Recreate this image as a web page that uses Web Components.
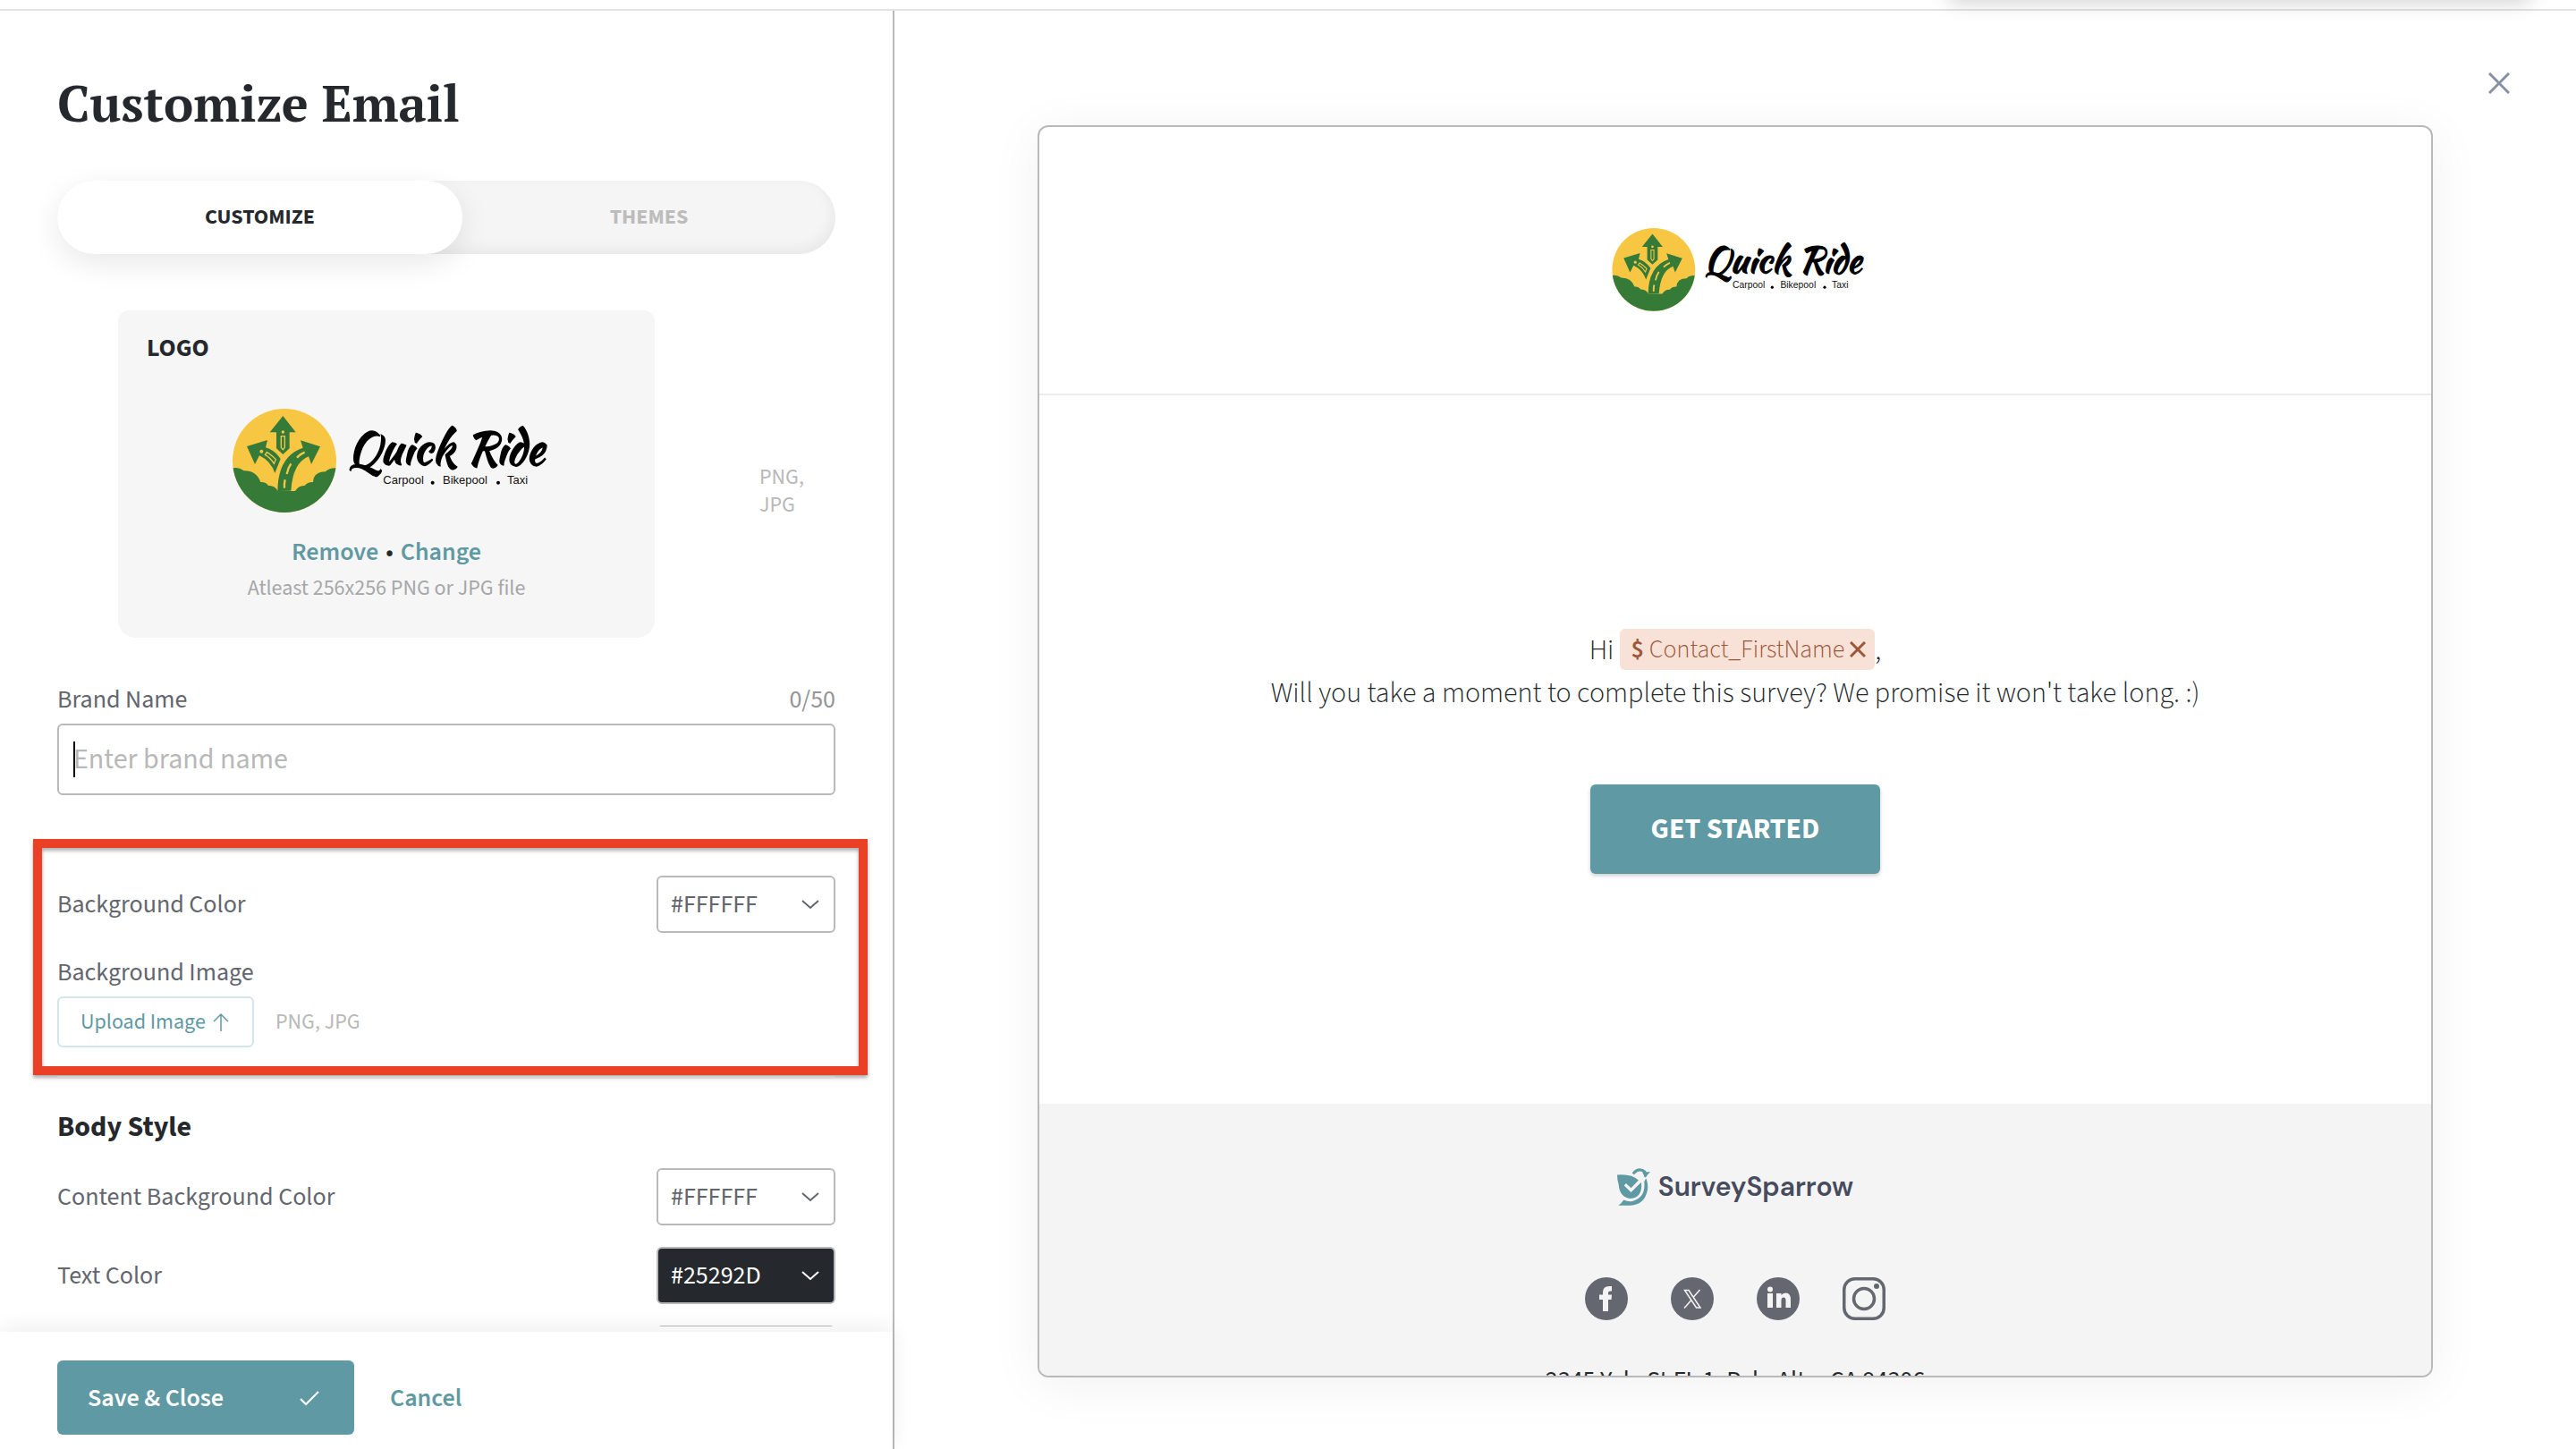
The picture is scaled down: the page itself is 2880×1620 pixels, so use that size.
<!DOCTYPE html>
<html lang="en">
<head>
<meta charset="utf-8">
<title>Customize Email</title>
<style>
  html, body { height: 100%; margin: 0; }
  body {
    --ink: #25292d;
    --label: #63666e;
    --muted: #b8b8b8;
    --line: #b9b9b9;
    --teal: #5f99a3;
    --sans: "Source Sans 3", "Noto Sans CJK JP", "Noto Sans", sans-serif;
    font-family: var(--sans);
    font-size: 28px;
    line-height: 36px;
    color: var(--ink);
    background: #fff;
    overflow: hidden;
  }
</style>
</head>
<body>
<email-customizer></email-customizer>

<script>
  function define(name, html, setup) {
    const template = document.createElement('template');
    template.innerHTML = html;
    customElements.define(name, class extends HTMLElement {
      constructor() {
        super();
        this.attachShadow({ mode: 'open' }).append(template.content.cloneNode(true));
      }
      connectedCallback() {
        if (setup) setup(this, this.shadowRoot);
      }
    });
  }

  define('quick-ride-logo', `
    <style>
      :host { display: block; width: 360px; }
      svg { display: block; width: 100%; height: auto; }
    </style>
    <svg viewBox="36 51 1080 348" role="img" aria-label="Quick Ride">
      <defs><clipPath id="disc"><circle cx="234" cy="225" r="174"/></clipPath></defs>
      <circle cx="234" cy="225" r="174" fill="#f7c744"/>
      <g clip-path="url(#disc)" fill="#367a38">
        <path d="M50 252 Q78 243 98 259 Q140 258 154 297 Q172 296 179 308 Q202 308 212 327 L270 327 Q282 307 302 309 Q312 296 330 297 Q332 262 372 262 Q386 246 420 251 V410 H50Z"/>
        <path d="M229 75 L272 130 H251 V184 L229 204 L207 184 V130 H185Z"/>
        <path d="M108 177 L177 156 L171 181 Q202 190 221 219 L202 267 Q188 226 150 208 L135 237Z"/>
        <path d="M288 157 L354 178 L324 237 L315 211 Q262 232 256 326 L211 327 Q212 210 296 182Z"/>
      </g>
      <g fill="none" stroke="#f7c744" stroke-width="4">
        <path d="M223 143 H235 V181 L229 188 L223 181Z"/>
        <path d="M169 205 L175 197 Q192 207 205 221 L199 235 Q187 215 169 205Z"/>
        <path d="M242 270 Q246 249 256 235 M234 317 Q233 302 236 289" stroke-width="7"/>
        <path d="M276 215 Q287 203 302 197" stroke-width="7"/>
      </g>
      <g fill="#f7c744"><circle cx="229" cy="129" r="5"/><circle cx="157" cy="194" r="6"/></g>
      <text x="446" y="237" font-family="Kaushan Script, cursive" font-size="152" fill="#000" stroke="#000" stroke-width="4">Quick Ride</text>
      <g font-family="Liberation Sans, Arial, sans-serif" font-size="39" fill="#111">
        <text x="565" y="303">Carpool</text>
        <text x="765" y="303">Bikepool</text>
        <text x="981" y="303">Taxi</text>
      </g>
      <circle cx="731" cy="299" r="6"/><circle cx="951" cy="299" r="6"/>
    </svg>`);

  define('sparrow-logo', `
    <style>
      :host { display: flex; align-items: center; gap: 9px; height: 42px;
        font: 600 30px/42px "DM Sans", sans-serif; color: #464b5e; }
      svg { flex: none; width: 37px; height: 42px; }
    </style>
    <svg viewBox="270 257 110 125" aria-hidden="true">
      <path fill="#5f99a3" d="M270 279 Q318 275 341 297 L316 323 L300 308 L293 315 L316 337 L350 304 Q356 355 314 358 Q278 354 275 312 Q270 297 270 279Z"/>
      <path fill="none" stroke="#5f99a3" stroke-width="9" d="M323 276 Q341 253 364 270"/>
      <path fill="#5f99a3" d="M353 262 L365 270 L380 270 Q370 279 366 287 L357 291 Q362 281 355 274Z"/>
      <path fill="#5f99a3" d="M366 291 Q374 307 371 330 Q361 379 314 381 Q294 381 274 381 Q284 375 292 363 Q306 369 320 367 Q366 356 360 302Z"/>
      <path fill="none" stroke="#f4f4f4" stroke-width="7" d="M297 311 L316 330 L362 287"/>
    </svg>
    <span>SurveySparrow</span>`);

  define('segment-tabs', `
    <style>
      :host { display: block; }
      div { display: flex; height: 82px; border-radius: 41px; background: #f5f5f5;
        box-shadow: inset -4px -6px 14px rgba(0,0,0,.05); }
      button { flex: 417 1 0; border: 0; padding: 0; border-radius: 41px; background: none;
        font: 700 24px/30px var(--sans); color: #bcbcbc; }
      button[aria-selected=true] { flex-grow: 453; background: #fff; color: var(--ink);
        box-shadow: 0 10px 34px rgba(0,0,0,.09); }
    </style>
    <div role="tablist">
      <button role="tab" aria-selected="true">CUSTOMIZE</button>
      <button role="tab" aria-selected="false">THEMES</button>
    </div>`);

  define('logo-uploader', `
    <style>
      :host { display: flex; align-items: center; gap: 117px; padding-left: 68px; }
      section { box-sizing: border-box; flex: 0 1 600px; height: 366px; padding: 24px 32px 0;
        border-radius: 12px 12px 20px 20px; background: #f6f6f6;
        display: flex; flex-direction: column; align-items: center; }
      h2 { align-self: flex-start; margin: 0 0 50px; font-size: 28px; line-height: 36px; font-weight: 700; }
      .actions { display: flex; gap: 8px; margin-top: 26px; }
      a { color: var(--teal); font-weight: 600; text-decoration: none; }
      small { font-size: 24px; line-height: 30px; color: #a6a7a9; margin-top: 8px; }
      p { width: 60px; margin: 0; padding-top: 38px; font-size: 24px; line-height: 31px; color: var(--muted); }
    </style>
    <section>
      <h2>LOGO</h2>
      <quick-ride-logo></quick-ride-logo>
      <div class="actions"><a href="#remove">Remove</a><span>•</span><a href="#change">Change</a></div>
      <small>Atleast 256x256 PNG or JPG file</small>
    </section>
    <p>PNG, JPG</p>`);

  define('brand-field', `
    <style>
      :host { display: block; }
      .top { display: flex; justify-content: space-between; margin-bottom: 9px; }
      label { color: var(--label); }
      output { color: #939598; }
      .box { position: relative; }
      .box::after { content: ""; position: absolute; left: 18px; top: 20px; width: 2px; height: 40px; background: #000; }
      input { display: block; box-sizing: border-box; width: 100%; height: 80px; padding: 0 16px;
        border: 2px solid var(--line); border-radius: 6px; background: #fff; outline: 0;
        font: 400 32px/40px var(--sans); color: var(--ink); }
      input::placeholder { color: var(--muted); opacity: 1; }
    </style>
    <div class="top"><label for="brand">Brand Name</label><output for="brand">0/50</output></div>
    <div class="box"><input id="brand" type="text" maxlength="50" placeholder="Enter brand name"></div>`);

  define('color-field', `
    <style>
      :host { display: flex; align-items: center; justify-content: space-between; height: 64px;
        --swatch: #fff; --on: var(--label); }
      :host([dark]) { --swatch: #25292d; --on: #fff; }
      label { color: var(--label); }
      .box { display: grid; align-items: center; width: 200px; }
      select, svg { grid-area: 1 / 1; }
      select { appearance: none; box-sizing: border-box; width: 100%; height: 64px; padding: 0 14px;
        border: 2px solid var(--line); border-radius: 6px; background: var(--swatch); color: var(--on);
        font: 400 28px/36px var(--sans); }
      svg { justify-self: end; width: 20px; height: 12px; margin-right: 18px; pointer-events: none;
        fill: none; stroke: var(--on); stroke-width: 2; }
    </style>
    <label for="color"></label>
    <div class="box">
      <select id="color"><option></option></select>
      <svg viewBox="0 0 20 12" aria-hidden="true"><path d="M1 2 L10 10 L19 2"/></svg>
    </div>`, (host, root) => {
      root.querySelector('label').textContent = host.getAttribute('label');
      root.querySelector('option').textContent = host.getAttribute('value');
    });

  define('image-upload', `
    <style>
      :host { display: block; }
      span { display: block; color: var(--label); margin-bottom: 9px; }
      div { display: flex; align-items: center; gap: 24px; }
      button { display: flex; align-items: center; gap: 8px; box-sizing: border-box; height: 57px; width: 220px;
        padding: 0 24px; border: 2px solid #d2e5e9; border-radius: 6px; background: #fff; white-space: nowrap;
        font: 400 24px/30px var(--sans); color: var(--teal); }
      svg { flex: none; width: 18px; height: 22px; fill: none; stroke: currentColor; stroke-width: 1.500; }
      small { font-size: 24px; line-height: 30px; color: var(--muted); }
    </style>
    <span id="title">Background Image</span>
    <div>
      <button aria-describedby="title">Upload Image
        <svg viewBox="0 0 18 22" aria-hidden="true"><path d="M9 21 V2 M1 10 L9 2 L17 10"/></svg>
      </button>
      <small>PNG, JPG</small>
    </div>`);

  define('highlight-box', `
    <style>
      :host { display: block; margin: 49px -36px 0 -27px; padding: 31px 26px 21px 17px;
        border: 10px solid #ea4026;
        box-shadow: 0 3px 4px rgba(0,0,0,.32), inset 0 3px 4px rgba(0,0,0,.32); }
    </style>
    <slot></slot>`);

  define('settings-panel', `
    <style>
      :host { display: flex; flex-direction: column; min-height: 0; box-sizing: border-box;
        border-right: 2px solid var(--line); }
      .scroll { flex: 1 1 0; min-height: 0; overflow: hidden; padding: 67px 64px 0; margin-bottom: 6px; }
      h1 { margin: 0 0 51px; font: 700 56px/72px "PT Serif", "Liberation Serif", serif; }
      h2 { margin: 37px 0 28px; font-size: 32px; line-height: 36px; font-weight: 700; }
      segment-tabs { margin-bottom: 63px; }
      logo-uploader { margin-bottom: 51px; }
      image-upload { margin-top: 26px; }
      hr { border: 0; height: 2px; margin: 1px 0 0; background: #d0d0d0; }
      .fields { display: grid; gap: 24px; }
      footer { position: relative; display: flex; align-items: center; gap: 40px; padding: 32px 64px 16px;
        background: #fff; box-shadow: 0 -4px 24px rgba(0,0,0,.07); }
      button { box-sizing: border-box; display: flex; align-items: center; justify-content: space-between;
        width: 332px; height: 83px; padding: 0 38px 0 34px; border: 0; border-radius: 6px; background: var(--teal);
        font: 600 28px/36px var(--sans); color: #fff; }
      svg { width: 24px; height: 20px; fill: none; stroke: #fff; stroke-width: 2; }
      a { color: var(--teal); font-weight: 600; text-decoration: none; }
    </style>
    <div class="scroll">
      <h1>Customize Email</h1>
      <segment-tabs></segment-tabs>
      <logo-uploader></logo-uploader>
      <brand-field></brand-field>
      <highlight-box>
        <color-field label="Background Color" value="#FFFFFF"></color-field>
        <image-upload></image-upload>
      </highlight-box>
      <hr>
      <h2>Body Style</h2>
      <div class="fields">
        <color-field label="Content Background Color" value="#FFFFFF"></color-field>
        <color-field label="Text Color" value="#25292D" dark></color-field>
        <color-field label="" value=""></color-field>
      </div>
    </div>
    <footer>
      <button>Save &amp; Close
        <svg viewBox="0 0 24 20" aria-hidden="true"><path d="M2 11 L8 17 L22 3"/></svg>
      </button>
      <a href="#cancel">Cancel</a>
    </footer>`);

  define('merge-tag', `
    <style>
      :host { display: flex; align-items: center; gap: 6px; height: 46px; padding: 0 10px 0 12px;
        box-sizing: border-box; border-radius: 6px; background: #f8e1d7; color: #9c5638;
        font-size: 28px; line-height: 46px; font-weight: 300; }
      b { font-weight: 600; }
      button { display: flex; border: 0; padding: 0; background: none; color: inherit; }
      svg { width: 18px; height: 18px; fill: none; stroke: currentColor; stroke-width: 3; }
    </style>
    <b>$</b><slot></slot>
    <button aria-label="Remove variable"><svg viewBox="0 0 18 18"><path d="M1 1 L17 17 M17 1 L1 17"/></svg></button>`);

  define('social-links', `
    <style>
      :host { display: flex; gap: 48px; }
      a { display: block; width: 48px; height: 48px; }
      svg { display: block; width: 48px; height: 48px; fill: #646770; }
      .w { fill: #f4f4f4; }
      .s { fill: none; stroke: #646770; }
      .x { fill: none; stroke: #f4f4f4; }
    </style>
    <a href="#facebook" aria-label="Facebook"><svg viewBox="0 0 48 48"><circle cx="24" cy="24" r="24"/>
      <path class="w" d="M20 38 V25 H16 V19.500 H20 V17 Q20 10 27 10 H30 V15.500 H28 Q26 15.500 26 17.500 V19.500 H30 L29.500 25 H26 V38Z"/></svg></a>
    <a href="#x" aria-label="X"><svg viewBox="0 0 48 48"><circle cx="24" cy="24" r="24"/>
      <path class="x" stroke-width="1.500" d="M15.500 14.500 H20 L33 34 H28.500Z M32.500 14 L25 22.500 M22.500 26 L15 34.500"/></svg></a>
    <a href="#linkedin" aria-label="LinkedIn"><svg viewBox="0 0 48 48"><circle cx="24" cy="24" r="24"/>
      <circle class="w" cx="15" cy="13.500" r="3"/>
      <path class="w" d="M12 18 H18 V34 H12Z M22 18 H27.500 V20 Q29 17.500 32.500 17.500 Q38 17.500 38 25 V34 H32.500 V26 Q32.500 22.500 30 22.500 Q27.500 22.500 27.500 26 V34 H22Z"/></svg></a>
    <a href="#instagram" aria-label="Instagram"><svg viewBox="0 0 48 48">
      <rect class="s" x="1.750" y="1.750" width="44.500" height="44.500" rx="12" stroke-width="3.500"/>
      <circle class="s" cx="24" cy="24" r="11.500" stroke-width="3.500"/><circle cx="38" cy="10" r="3"/></svg></a>`);

  define('email-preview', `
    <style>
      :host { display: block; box-sizing: border-box; overflow: hidden; border: 2px solid var(--line);
        border-radius: 12px; background: #fff; box-shadow: 0 8px 60px rgba(0,0,0,.06); }
      header { display: flex; justify-content: center; padding: 113px 0 92px; border-bottom: 2px solid #ececec; }
      quick-ride-logo { width: 288px; }
      main { display: flex; flex-direction: column; align-items: center; padding: 261px 40px 257px; }
      p { margin: 0 0 78px; text-align: center; font-size: 32px; line-height: 48px; font-weight: 300; }
      .line { display: flex; justify-content: center; gap: 7px; height: 48px; }
      .line span:last-child { margin-left: -7px; }
      button { height: 100px; width: 324px; border: 0; border-radius: 6px; background: var(--teal); color: #fff;
        font: 700 32px/40px var(--sans); box-shadow: 0 2px 4px rgba(0,0,0,.2); }
      footer { display: flex; flex-direction: column; align-items: center; padding: 72px 0 60px; background: #f4f4f4; }
      social-links { margin: 80px 0 49px; }
      address { font-style: normal; }
    </style>
    <header><quick-ride-logo></quick-ride-logo></header>
    <main>
      <p><span class="line"><span>Hi</span><merge-tag>Contact_FirstName</merge-tag><span>,</span></span>
        Will you take a moment to complete this survey? We promise it won't take long. :)</p>
      <button>GET STARTED</button>
    </main>
    <footer>
      <sparrow-logo></sparrow-logo>
      <social-links></social-links>
      <address>2345 Yale St FL 1, Palo Alto, CA 94306</address>
    </footer>`);

  define('preview-pane', `
    <style>
      :host { display: flex; flex-direction: column; min-width: 0; min-height: 0; }
      .bar { flex: none; display: flex; justify-content: flex-end; padding: 69px 74px 35px; }
      button { display: block; border: 0; padding: 0; background: none; }
      svg { display: block; width: 24px; height: 24px; fill: none; stroke: #8491a5; stroke-width: 3; }
      email-preview { flex: 1 1 0; min-height: 0; margin: 0 160px 80px; }
    </style>
    <div class="bar"><button aria-label="Close"><svg viewBox="0 0 24 24"><path d="M1 1 L23 23 M23 1 L1 23"/></svg></button></div>
    <email-preview></email-preview>`);

  define('email-customizer', `
    <style>
      :host { display: flex; flex-direction: column; height: 100vh; }
      .top { flex: none; display: flex; justify-content: flex-end; box-sizing: border-box; height: 12px;
        padding-right: 62px; border-bottom: 2px solid #e2e2e2; }
      .top i { width: 628px; height: 0; box-shadow: 0 -10px 24px 10px rgba(0,0,0,.24); }
      .panes { flex: 1; min-height: 0; display: grid; grid-template: minmax(0, 1fr) / 25fr 47fr; }
    </style>
    <div class="top"><i></i></div>
    <div class="panes">
      <settings-panel></settings-panel>
      <preview-pane></preview-pane>
    </div>`);
</script>
</body>
</html>
